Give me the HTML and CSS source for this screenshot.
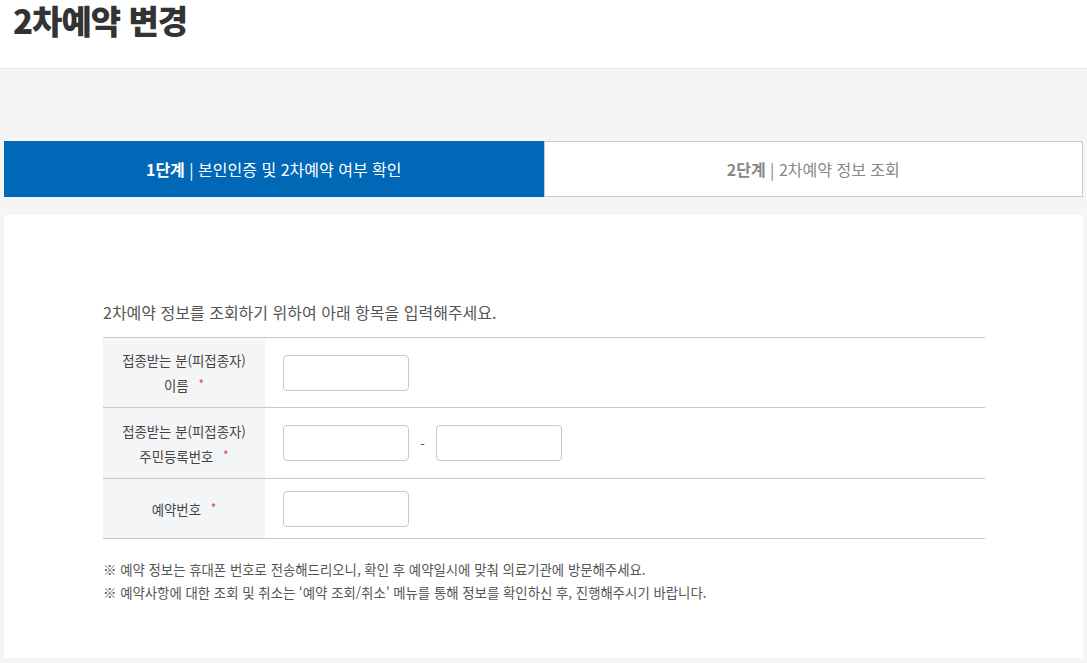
FILE: index.html
```html
<!DOCTYPE html>
<html lang="ko">
<head>
    <meta charset="UTF-8">
    <meta name="viewport" content="width=device-width, initial-scale=1.0">
    <title>2차예약 변경</title>
    <link rel="stylesheet" href="styles.css">
</head>
<body>
    <header class="page-head">
        <h1>2차예약 변경</h1>
    </header>

    <main class="page-body">
        <ul class="steps">
            <li class="step active"><b>1단계</b> | 본인인증 및 2차예약 여부 확인</li>
            <li class="step"><b>2단계</b> | 2차예약 정보 조회</li>
        </ul>

        <section class="panel">
            <p class="intro">2차예약 정보를 조회하기 위하여 아래 항목을 입력해주세요.</p>
            <table class="form-table">
                <tr>
                    <th>접종받는 분(피접종자)<br>이름 <span class="req">*</span></th>
                    <td><input type="text" class="field"></td>
                </tr>
                <tr class="ssn">
                    <th>접종받는 분(피접종자)<br>주민등록번호 <span class="req">*</span></th>
                    <td>
                        <input type="text" class="field"><span class="dash">-</span><input type="password" class="field">
                    </td>
                </tr>
                <tr class="last">
                    <th>예약번호 <span class="req">*</span></th>
                    <td><input type="text" class="field"></td>
                </tr>
            </table>
            <ul class="notes">
                <li>※ 예약 정보는 휴대폰 번호로 전송해드리오니, 확인 후 예약일시에 맞춰 의료기관에 방문해주세요.</li>
                <li>※ 예약사항에 대한 조회 및 취소는 ‘예약 조회/취소’ 메뉴를 통해 정보를 확인하신 후, 진행해주시기 바랍니다.</li>
            </ul>
        </section>
    </main>
</body>
</html>
```

FILE: styles.css
```css
body {
    margin: 0;
    font-family: "Noto Sans CJK KR", "Noto Sans", sans-serif;
    color: #333;
    background-color: #f4f5f7;
}
.page-head {
    height: 68px;
    background: #fff;
    border-bottom: 1px solid #e6e8ec;
}
.page-head h1 {
    margin: 0;
    padding: 0 0 0 13px;
    font-size: 33px;
    line-height: 40px;
    font-weight: 900;
    letter-spacing: -1px;
    color: #333;
}
.page-body {
    padding: 72px 4px 4px;
}
.steps {
    display: flex;
    margin: 0 0 18px;
    padding: 0;
    list-style: none;
}
.step {
    flex: 1;
    height: 56px;
    line-height: 54px;
    text-align: center;
    font-size: 16px;
    color: #888;
    background: #fff;
    border: 1px solid #c8cad0;
    box-sizing: border-box;
}
.step b {
    font-weight: 700;
}
.step.active {
    color: #fff;
    background: #0068b7;
    border-color: #0068b7;
}
.panel {
    background: #fff;
    padding: 85px 98px 54px 99px;
}
.intro {
    margin: 0 0 13px;
    font-size: 16px;
    line-height: 24px;
    color: #555;
}
.form-table {
    width: 100%;
    border-collapse: collapse;
    border-top: 1px solid #c8c8c8;
}
.form-table tr {
    border-bottom: 1px solid #c8c8c8;
}
.form-table th {
    width: 162px;
    height: 69px;
    padding: 0;
    background: #f4f5f7;
    font-size: 13.4px;
    font-weight: 400;
    line-height: 24px;
    color: #444;
}
.form-table tr.ssn th {
    height: 70px;
}
.form-table tr.last th {
    height: 59px;
}
.form-table td {
    padding: 0 0 0 18px;
}
.req {
    color: #e0464b;
    font-size: 12px;
    margin-left: 6px;
    vertical-align: 2px;
}
.field {
    width: 126px;
    height: 36px;
    box-sizing: border-box;
    border: 1px solid #c5c8ce;
    border-radius: 4px;
    vertical-align: middle;
}
.dash {
    display: inline-block;
    width: 27px;
    text-align: center;
    font-size: 13px;
    color: #555;
    vertical-align: middle;
}
.notes {
    margin: 19px 0 0;
    padding: 0;
    list-style: none;
    font-size: 13.4px;
    line-height: 23px;
    color: #555;
}
```
